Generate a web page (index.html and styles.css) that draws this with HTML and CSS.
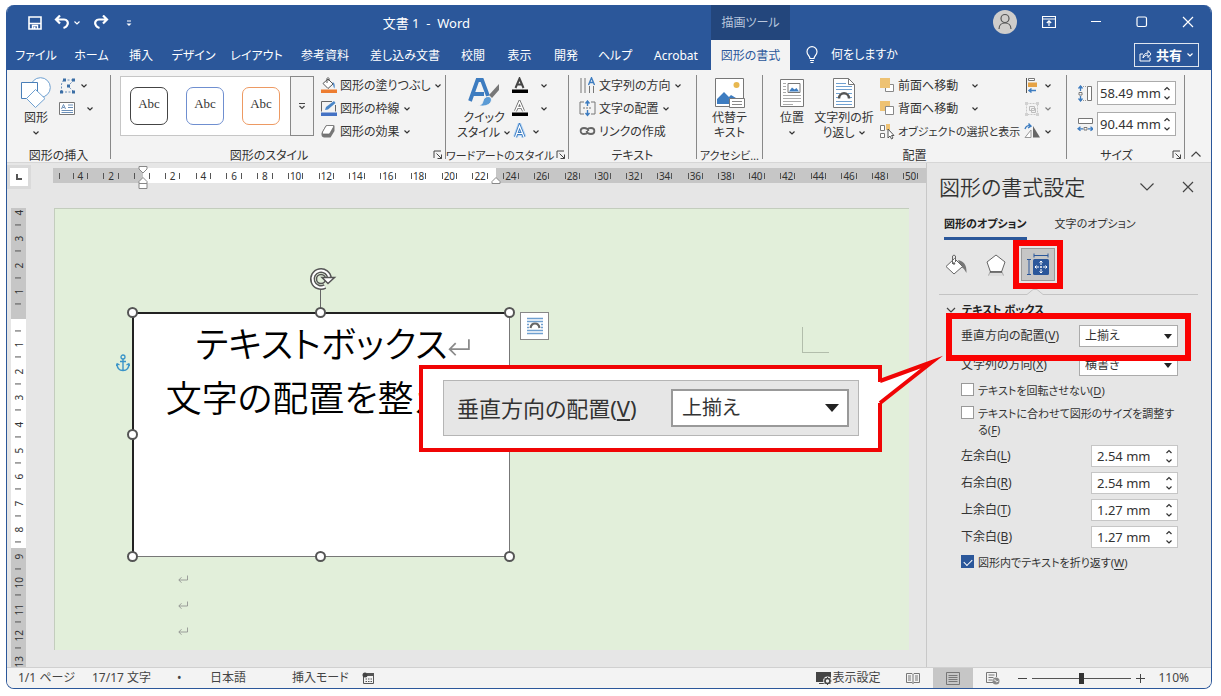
FILE: index.html
```html
<!DOCTYPE html>
<html lang="ja">
<head>
  <meta charset="UTF-8">
  <title>文書 1 - Word</title>
  <link rel="stylesheet" href="styles.css">
</head>
<body>

<svg class="defs" aria-hidden="true">
  <symbol id="chev" viewBox="0 0 8 8"><path d="M1.5 2.5 4 5l2.5-2.5" fill="none" stroke="currentColor" stroke-width="1.2"/></symbol>
  <symbol id="up" viewBox="0 0 8 8"><path d="M1.5 5 4 2.5 6.5 5" fill="none" stroke="currentColor" stroke-width="1.2"/></symbol>
  <symbol id="launcher" viewBox="0 0 10 10"><path d="M1 8V1h7M3.500 3.500l5 5M8.500 4.500v4h-4" fill="none" stroke="#444"/></symbol>
  <symbol id="ret" viewBox="0 0 20 16"><path d="M19 1v9H2M7 4.500 1.500 10 7 15.500" fill="none" stroke="#8a8a8a" stroke-width="1.600"/></symbol>
</svg>

<div class="window">
  <header class="header">
    <div class="titlebar">
      <div class="quick">
        <button aria-label="上書き保存"><svg width="14" height="14" viewBox="0 0 14 14"><path d="M1 1h12v12H1z" fill="none" stroke="#fff" stroke-width="1.600"/><path d="M1 7.500h12M4.500 13V9.500h5V13" fill="none" stroke="#fff" stroke-width="1.400"/><path d="M5.500 10.500h2V13h-2z" fill="#fff"/></svg></button>
        <button aria-label="元に戻す"><svg width="16" height="16" viewBox="0 0 16 16"><path d="M6 .5 2 4.500l4 4M2.500 4.500H10c3 0 4.500 2.500 3.500 5-.5 1.500-2 3-4 3.500" fill="none" stroke="#fff" stroke-width="2.200"/></svg><svg width="8" height="8"><use href="#chev"/></svg></button>
        <button aria-label="やり直し"><svg width="16" height="16" viewBox="0 0 16 16"><path d="m10 .5 4 4-4 4M13.500 4.500H6C3 4.500 1.500 7 2.500 9.500c.5 1.500 2 3 4 3.500" fill="none" stroke="#fff" stroke-width="2.200"/></svg></button>
        <button aria-label="クイックアクセスのカスタマイズ"><svg width="8" height="8" viewBox="0 0 8 8"><path d="M2 2h4" stroke="#fff"/><path d="M1.500 4.500h5L4 7z" fill="#fff"/></svg></button>
      </div>
      <span class="doc-title">文書 1 &nbsp;-&nbsp; Word</span>
    </div>
    <div class="tool-label">描画ツール</div>
    <div class="win-buttons">
      <button class="avatar" aria-label="アカウント"><svg width="24" height="24" viewBox="0 0 24 24"><circle cx="12" cy="12" r="12" fill="#cfcdcb"/><circle cx="12" cy="8.500" r="4" fill="none" stroke="#555" stroke-width="1.200"/><path d="M6 19c0-8 12-8 12 0" fill="none" stroke="#555" stroke-width="1.200"/></svg></button>
      <button aria-label="リボンの表示オプション"><svg width="14" height="12" viewBox="0 0 14 12"><path d="M.5.5h13v11H.5zM.5 3h13M7 10V5M4.800 7 7 4.800 9.200 7" fill="none" stroke="#fff" stroke-width="1.200"/></svg></button>
      <button aria-label="最小化"><svg width="12" height="12"><path d="M1 5.500h10" stroke="#fff"/></svg></button>
      <button aria-label="最大化"><svg width="12" height="12"><rect x="1" y="1" width="9.500" height="9.500" rx="1.500" fill="none" stroke="#fff" stroke-width="1.200"/></svg></button>
      <button aria-label="閉じる"><svg width="12" height="12"><path d="M1 1l10 10M11 1 1 11" stroke="#fff" stroke-width="1.200"/></svg></button>
    </div>
    <nav class="tabs">
      <button>ファイル</button>
      <button>ホーム</button>
      <button>挿入</button>
      <button>デザイン</button>
      <button>レイアウト</button>
      <button>参考資料</button>
      <button>差し込み文書</button>
      <button>校閲</button>
      <button>表示</button>
      <button>開発</button>
      <button>ヘルプ</button>
      <button>Acrobat</button>
    </nav>
    <button class="tab-active">図形の書式</button>
    <div class="tell">
      <button class="tell-me"><svg width="12" height="18" viewBox="0 0 12 18"><path d="M4 12.500c0-2.500-3-3.500-3-6.800a5 5 0 0 1 10 0c0 3.300-3 4.300-3 6.800zM4 14.500h4M4.500 16.500h3" fill="none" stroke="#fff" stroke-width="1.200"/></svg>何をしますか</button>
      <button class="share"><svg width="13" height="13" viewBox="0 0 13 13"><path d="M4 5H1v7h10V8.500M4 9c0-3 2-5 5-5V1.500l3 3.500-3 3.500V6C7 6 5 7 4 9z" fill="none" stroke="#fff"/></svg>共有<svg width="8" height="8"><use href="#chev"/></svg></button>
    </div>
  </header>

  <div class="ribbon">
    <section class="group g-insert">
      <div class="group-body">
        <button class="big">
          <svg width="32" height="32" viewBox="0 0 32 32"><circle cx="20.500" cy="10.500" r="9.800" fill="#fff" stroke="#6fa0d0"/><path d="M1.500 5.500h16v16h-16z" fill="#fff" stroke="#4a7fb8"/><path d="M15.500 12.500 25 21.500l-9.500 9-9-9z" fill="#fff" stroke="#6fa0d0"/></svg>
          <span>図形</span>
          <svg width="8" height="8"><use href="#chev"/></svg>
        </button>
        <div class="col icons">
          <button aria-label="図形の編集"><svg width="18" height="16" viewBox="0 0 18 16"><path d="M5 2h10M15 2 9 8l6 6M2.500 14V6l2-4M2.500 14H15" fill="none" stroke="#6b8fb8" stroke-dasharray="2 1.500"/><path d="M4 .5h3v3H4zM13 .5h3v3h-3zM1 12.500h3v3H1zM13 12.500h3v3h-3zM8 6.500h3v3H8z" fill="#3b6ea5"/></svg><svg width="8" height="8"><use href="#chev"/></svg></button>
          <button aria-label="テキスト ボックス"><svg width="16" height="14" viewBox="0 0 16 14"><path d="M.5.5h15v12H.5z" fill="#fff" stroke="#777"/><path d="m2.500 7 2-4.500 2 4.500M3.500 5.500h2M9 3h5M9 5.500h5M2.500 8.500H14M2.500 10.500H14" fill="none" stroke="#6b8fb8"/></svg><svg class="far" width="8" height="8"><use href="#chev"/></svg></button>
        </div>
      </div>
      <div class="group-label">図形の挿入</div>
    </section>

    <section class="group g-style">
      <div class="group-body">
        <div class="gallery">
          <button class="thumb">Abc</button>
          <button class="thumb blue">Abc</button>
          <button class="thumb orange">Abc</button>
          <button class="more" aria-label="その他"><svg width="8" height="8" viewBox="0 0 8 8"><path d="M1 1.500h6M1.500 4 4 6.500 6.500 4" fill="none" stroke="#444" stroke-width="1.200"/></svg></button>
        </div>
        <div class="col">
          <button><svg width="17" height="17" viewBox="0 0 17 17"><path d="m3 6.500 5-4.500 5 5-5 4.500z" fill="#fff" stroke="#555"/><path d="M7 6V1.500q1-2 2 0V4" fill="none" stroke="#555"/><path d="M12.500 5c2.500 1 2.500 4 2 6.500-1.500-1.500-1-4-2-6.500z" fill="#4a86c8"/><path d="M1 12.500h16V16H1z" fill="#ed7d31"/></svg>図形の塗りつぶし<svg width="8" height="8"><use href="#chev"/></svg></button>
          <button><svg width="17" height="17" viewBox="0 0 17 17"><path d="M12 1.500H1.500v10M15.500 5v6.500" fill="none" stroke="#666"/><path d="m5 10 1-3 8-6 1.500 2-7.500 6.500z" fill="#4a86c8"/><path d="M1 12.500h16V16H1z" fill="#4472c4"/></svg>図形の枠線<svg width="8" height="8"><use href="#chev"/></svg></button>
          <button><svg width="17" height="17" viewBox="0 0 17 17"><path d="M1.500 10 5.500 3q.5-1 2-1h5.500q2 0 1.500 2v4l-4 6.500H4q-3-.5-2.500-4.500z" fill="#777"/><path d="M2.500 9 6 3q.5-.5 1.500-.5H13q1 0 .5 1.500l-3.500 6q-.5 1-1.500 1H3.500q-1.500 0-1-2z" fill="#fff" stroke="#666" stroke-width=".7"/></svg>図形の効果<svg width="8" height="8"><use href="#chev"/></svg></button>
        </div>
      </div>
      <div class="group-label">図形のスタイル<button class="launch" aria-label="図形の書式設定"><svg width="10" height="10"><use href="#launcher"/></svg></button></div>
    </section>

    <section class="group g-wordart">
      <div class="group-body">
        <button class="big">
          <svg width="32" height="32" viewBox="0 0 32 32"><path d="M2 24 9.500 3h4.500l6 16M6 17h10" fill="none" stroke="#3d7cc0" stroke-width="3.800"/><path d="M31 7v6l-7 8-3-3z" fill="#777"/><path d="M20 19.500c3 0 4.500 3 2.500 6-2 3-7 4.500-12 3 3-.5 4-2 4.500-4.500.500-3 3-4.500 5-4.500z" fill="#5b9bd5" stroke="#f3f3f3"/></svg>
          <span>クイック<br>スタイル <svg width="8" height="8"><use href="#chev"/></svg></span>
        </button>
        <div class="col icons">
          <button aria-label="文字の塗りつぶし"><svg width="18" height="17" viewBox="0 0 18 17"><path d="M4.500 11 8.500 1.500 12.500 11M6 7.500h5" fill="none" stroke="#444" stroke-width="2"/><path d="M1 12.500h16V16H1z"/></svg><svg class="far" width="8" height="8"><use href="#chev"/></svg></button>
          <button aria-label="文字の輪郭"><svg width="18" height="17" viewBox="0 0 18 17"><path d="M4.500 11 8.500 2 12.500 11M6 7.500h5" fill="none" stroke="#666" stroke-width="3"/><path d="M4.500 11 8.500 2 12.500 11M6 7.500h5" fill="none" stroke="#fff" stroke-width="1.400"/><path d="M1 12.500h16V16H1z"/></svg><svg class="far" width="8" height="8"><use href="#chev"/></svg></button>
          <button aria-label="文字の効果"><svg width="18" height="17" viewBox="0 0 18 17"><path d="M4.500 14 8.500 3 13 14M6 10.500h5" fill="none" stroke="#b5d5f5" stroke-width="5"/><path d="M4.500 14 8.500 3 13 14M6 10.500h5" fill="none" stroke="#3d7cc0" stroke-width="3"/><path d="M4.500 14 8.500 3 13 14M6 10.500h5" fill="none" stroke="#fff" stroke-width="1.200"/></svg><svg width="8" height="8"><use href="#chev"/></svg></button>
        </div>
      </div>
      <div class="group-label small">ワードアートのスタイル<button class="launch" aria-label="文字の効果の設定"><svg width="10" height="10"><use href="#launcher"/></svg></button></div>
    </section>

    <section class="group g-text">
      <div class="group-body">
        <div class="col">
          <button><svg width="17" height="17" viewBox="0 0 17 17"><path d="M2 1v15M6 1v15M10.500 9v7M14.500 9v7" stroke="#777"/><path d="M9.500 8 12.500.8 15.500 8M10.500 5.500h4" fill="none" stroke="#3d7cc0" stroke-width="1.400"/></svg>文字列の方向<svg width="8" height="8"><use href="#chev"/></svg></button>
          <button><svg width="17" height="17" viewBox="0 0 17 17"><path d="M5 2H1v12h4M12 2h4v12h-4" fill="none" stroke="#777"/><path d="M4 8h9" stroke="#777" stroke-dasharray="2 1"/><path d="M8.500 6V1.500M6.500 3.500l2-2.500 2 2.500M8.500 10v5M6.500 13l2 2.500 2-2.500" fill="none" stroke="#3d7cc0" stroke-width="1.400"/></svg>文字の配置<svg width="8" height="8"><use href="#chev"/></svg></button>
          <button><svg width="17" height="17" viewBox="0 0 17 17"><path d="M9 9.500c-1 1-1.500 1.500-4 1.500-4.500 0-4.500-6 0-6 3 0 4 1 4.500 3M8 6.500C9 5.500 9.500 5 12 5c4.500 0 4.500 6 0 6-3 0-4-1-4.500-3" fill="none" stroke="#666" stroke-width="1.800"/></svg>リンクの作成</button>
        </div>
      </div>
      <div class="group-label">テキスト</div>
    </section>

    <section class="group g-access">
      <div class="group-body">
        <button class="big">
          <svg width="32" height="32" viewBox="0 0 32 32"><path d="M1.500 1.500h28v28h-28z" fill="#fff" stroke="#777"/><path d="M3 27v-5l7-7 5 5 2-2 5 3v6z" fill="#3d7cc0"/><circle cx="22.500" cy="8" r="3" fill="#e8b850"/><path d="M15.500 21.500h15v9h-15z" fill="#fff" stroke="#777"/><path d="M18 24.500h10M18 27.500h10" stroke="#888"/></svg>
          <span>代替テ<br>キスト</span>
        </button>
      </div>
      <div class="group-label small">アクセシビ…</div>
    </section>

    <section class="group g-arrange">
      <div class="group-body">
        <button class="big pos">
          <svg width="32" height="32" viewBox="0 0 32 32"><path d="M4.500 2.500h23v27h-23z" fill="#fff" stroke="#777"/><path d="M12 6.500h12v9H12z" fill="#fff" stroke="#777"/><path d="m13 14.500 3-4 2.500 2 2-1.500 2.500 3.500z" fill="#3d7cc0"/><path d="M7 6.500h3M7 9.500h3M7 12.500h3M7 15.500h3M7 18.500h18M7 21.500h18M7 24.500h18M7 27.500h10" stroke="#aaa"/></svg>
          <span>位置</span>
          <svg width="8" height="8"><use href="#chev"/></svg>
        </button>
        <button class="big wrap">
          <svg width="32" height="32" viewBox="0 0 32 32"><path d="M5.500 1.500h15l6 6v23h-21z" fill="#fff" stroke="#777"/><path d="M20.500 1.500v6h6" fill="none" stroke="#777"/><path d="M8 6.500h10M8 9.500h16M8 12.500h16M8 16.500h4M20 16.500h4M8 20.500h2M22 20.500h2M8 24.500h16M8 27.500h16" stroke="#6fa0d0"/><path d="M11 21.500c0-7 10-7 10 0" fill="none" stroke="#555" stroke-width="2.500"/></svg>
          <span>文字列の折<br>り返し <svg width="8" height="8"><use href="#chev"/></svg></span>
        </button>
        <div class="col order">
          <button><svg width="16" height="17" viewBox="0 0 16 17"><path d="M9 7.500h5.500v7h-8V11" fill="#fff" stroke="#888"/><path d="M1 1h10v10H1z" fill="#eec273"/></svg><span>前面へ移動</span><svg width="8" height="8"><use href="#chev"/></svg></button>
          <button><svg width="16" height="17" viewBox="0 0 16 17"><path d="M1 1h10v10H1z" fill="#eec273"/><path d="M6.500 6.500h8v8h-8z" fill="#fff" stroke="#888"/></svg><span>背面へ移動</span><svg width="8" height="8"><use href="#chev"/></svg></button>
          <button><svg width="16" height="17" viewBox="0 0 16 17"><path d="M1.500 2.500h4v5h-4zM1.500 10.500h4v4h-4z" fill="#fff" stroke="#777"/><path d="M7 1h4v6H7z" fill="#eec273"/><path d="M9 6v9l2-2 1.500 3 1.500-1-1.500-2.500H15z" fill="#fff" stroke="#555"/></svg><span class="small">オブジェクトの選択と表示</span></button>
        </div>
        <div class="col icons align">
          <button aria-label="配置"><svg width="16" height="17" viewBox="0 0 16 17"><path d="M2.500 1v15" stroke="#555"/><path d="M4.500 1.500h6v2h-6z" fill="#fff" stroke="#777"/><path d="M4 5.500h9V10H4z" fill="#e6a345"/><path d="M5 13.500h7M7.500 11.500l-2.500 2 2.500 2" fill="none" stroke="#3d7cc0" stroke-width="1.500"/></svg><svg width="8" height="8"><use href="#chev"/></svg></button>
          <button class="off" aria-label="グループ化" disabled><svg width="16" height="17" viewBox="0 0 16 17"><path d="M2.500 3.500h11v11h-11z" fill="none" stroke="#aaa" stroke-dasharray="2 1"/><path d="M5.500 6.500h5v4h-5zM7.500 8.500h4v4h-4z" fill="none" stroke="#999"/><path d="M1 2h3v3H1zM12 2h3v3h-3zM1 13h3v3H1zM12 13h3v3h-3z" fill="#bbb"/></svg><svg width="8" height="8"><use href="#chev"/></svg></button>
          <button aria-label="回転"><svg width="16" height="17" viewBox="0 0 16 17"><path d="M7 14.500H1L7 7z" fill="#fff" stroke="#999"/><path d="M9 3v11.500h7z" fill="#666"/><path d="M1 6c1-3 3-4 5.500-3M4.500.5 7 3.200 4 5" fill="none" stroke="#3d7cc0" stroke-width="1.400"/></svg><svg width="8" height="8"><use href="#chev"/></svg></button>
        </div>
      </div>
      <div class="group-label">配置</div>
    </section>

    <section class="group g-size">
      <div class="group-body size-body">
        <label class="size-row">
          <svg width="16" height="17" viewBox="0 0 16 17"><path d="M4 1.500h6M4 15.500h6" stroke="#999" stroke-dasharray="1 1"/><path d="M10.500 1.500h4v14h-4zM2 7.500h3v2.500H2z" fill="#fff" stroke="#777"/><path d="M3.500 6V2M1.500 3.500l2-2.500 2 2.500M3.500 11v4M1.500 13.500l2 2.500 2-2.500" fill="none" stroke="#3d7cc0" stroke-width="1.300"/></svg>
          <span class="spin"><input type="text" value="58.49 mm" aria-label="高さ"><span class="steps"><button aria-label="増やす"><svg width="8" height="8"><use href="#up"/></svg></button><button aria-label="減らす"><svg width="8" height="8"><use href="#chev"/></svg></button></span></span>
        </label>
        <label class="size-row">
          <svg width="16" height="17" viewBox="0 0 16 17"><path d="M1.500 2.500h14v5h-14zM7 11.500h3V14H7z" fill="#fff" stroke="#777"/><path d="M6 12.800H2M3.500 10.800l-2.500 2 2.500 2M11 12.800h4M13.500 10.800l2.500 2-2.500 2" fill="none" stroke="#3d7cc0" stroke-width="1.300"/></svg>
          <span class="spin"><input type="text" value="90.44 mm" aria-label="幅"><span class="steps"><button aria-label="増やす"><svg width="8" height="8"><use href="#up"/></svg></button><button aria-label="減らす"><svg width="8" height="8"><use href="#chev"/></svg></button></span></span>
        </label>
      </div>
      <div class="group-label">サイズ<button class="launch" aria-label="サイズの設定"><svg width="10" height="10"><use href="#launcher"/></svg></button></div>
    </section>
    <button class="collapse" aria-label="リボンを折りたたむ"><svg width="10" height="8" viewBox="0 0 10 8"><path d="m.5 6.500 4.500-4.500 4.500 4.500" fill="none" stroke="#444" stroke-width="1.200"/></svg></button>
  </div>

  <div class="workspace">
    <main class="document">
      <div class="ruler-row">
        <button class="tab-stop" aria-label="タブの種類"><svg width="8" height="8"><path d="M2 1v5h5" fill="none" stroke="#555" stroke-width="2"/></svg></button>
        <div class="ruler">
          <i class="first"></i>
          <i><b>4</b></i><i><b>2</b></i><i><b></b></i><i><b>2</b></i><i><b>4</b></i><i><b>6</b></i><i><b>8</b></i>
          <i><b>10</b></i><i><b>12</b></i><i><b>14</b></i><i><b>16</b></i><i><b>18</b></i><i><b>20</b></i><i><b>22</b></i>
          <i><b>24</b></i><i><b>26</b></i><i><b>28</b></i><i><b>30</b></i><i><b>32</b></i><i><b>34</b></i><i><b>36</b></i>
          <i><b>38</b></i><i><b>40</b></i><i><b>42</b></i><i><b>44</b></i><i><b>46</b></i><i><b>48</b></i><i><b>50</b></i>
          <svg class="indent left" width="10" height="25" viewBox="0 0 10 25"><path d="M1 1.500h8V4L5 8 1 4zM5 12.500l4 4v2H1v-2zM1 18.500h8v5H1z" fill="#fff" stroke="#888"/></svg>
          <svg class="indent right" width="10" height="9" viewBox="0 0 10 9"><path d="m5 1.500 4 4v2H1v-2z" fill="#fff" stroke="#888"/></svg>
        </div>
      </div>
      <div class="canvas">
        <div class="vruler"><div class="vmarks">
          <i>4</i><i>3</i><i>2</i><i>1</i><i></i><i>1</i><i>2</i><i>3</i><i>4</i><i>5</i><i>6</i><i>7</i><i>8</i><i>9</i><i>10</i><i>11</i><i>12</i><i>13</i>
        </div></div>
        <div class="page">
          <svg class="anchor" width="14" height="18" viewBox="0 0 14 18"><path d="M7 5v11.500M4 7.500h6M1 9.500c0 4 2 7 6 7s6-3 6-7M1 9.500l-.5 2.500M1 9.500l2.500 1.500M13 9.500l.5 2.500M13 9.500 10.500 11" fill="none" stroke="#3a94c8" stroke-width="1.400"/><circle cx="7" cy="3" r="2" fill="none" stroke="#3a94c8" stroke-width="1.300"/></svg>
          <div class="textbox">
            <p>テキストボックス<svg class="ret" width="22" height="18"><use href="#ret"/></svg></p>
            <p>文字の配置を整える</p>
            <span class="stem"></span>
            <svg class="rotate" width="28" height="24" viewBox="0 0 28 24"><path d="M20.500 11.500A8.500 8.500 0 1 0 16 19.500" fill="none" stroke="#555" stroke-width="5"/><path d="M20.500 11.500A8.500 8.500 0 1 0 16 19.500" fill="none" stroke="#fff" stroke-width="2"/><circle cx="12" cy="12" r="4.500" fill="none" stroke="#555" stroke-width="1.500"/><path d="M13 10.500h12.500l-6.500 6z" fill="#fff" stroke="#555" stroke-width="1.500"/></svg>
            <span class="handle tl"></span><span class="handle tc"></span><span class="handle tr"></span>
            <span class="handle ml"></span>
            <span class="handle bl"></span><span class="handle bc"></span><span class="handle br"></span>
          </div>
          <button class="layout-opt" aria-label="レイアウト オプション"><svg width="18" height="18" viewBox="0 0 18 18"><path d="M1 1.500h16M1 4.500h16M1 7.500h2M15 7.500h2M1 10.500h2M15 10.500h2M1 13.500h16M1 16.500h16" stroke="#6fa0d0" stroke-width="1.300"/><path d="M4.500 11c1-6 8-6 9 0" fill="none" stroke="#666" stroke-width="2.200"/></svg></button>
          <span class="crop"></span>
          <div class="marks">
            <svg width="10" height="8"><use href="#ret"/></svg>
            <svg width="10" height="8"><use href="#ret"/></svg>
            <svg width="10" height="8"><use href="#ret"/></svg>
          </div>
        </div>
      </div>
    </main>

    <aside class="panel">
      <div class="panel-head">
        <h2>図形の書式設定</h2>
        <button aria-label="作業ウィンドウのオプション"><svg width="16" height="12" viewBox="0 0 16 12"><path d="m1.500 2.500 6.500 6.500 6.500-6.500" fill="none" stroke="#444" stroke-width="1.200"/></svg></button>
        <button aria-label="閉じる"><svg width="12" height="12"><path d="m1 1 10 10M11 1 1 11" stroke="#444" stroke-width="1.200"/></svg></button>
      </div>
      <div class="panel-tabs small">
        <button class="on">図形のオプション</button>
        <button>文字のオプション</button>
      </div>
      <div class="panel-icons">
        <button aria-label="塗りつぶしと線"><svg width="22" height="22" viewBox="0 0 22 22"><path d="M13 6c5 1 9 4 8.500 13-2-3-2.500-5-5.500-6z" fill="#777"/><path d="m1 12.500 8.500-8 8 8-8.500 7.500z" fill="#fff" stroke="#666"/><path d="M7.500 10V2q1.500-2 3 0v6" fill="none" stroke="#666"/><circle cx="9" cy="9.500" r="1.200" fill="#666"/></svg></button>
        <button aria-label="効果"><svg width="22" height="24" viewBox="0 0 22 24"><path d="m11 2 9 7-3.500 10h-11L2 9z" fill="#fff" stroke="#666"/><path d="m5 19-2 4h16l-2-4z" fill="#ddd"/><path d="m5 19-1.500 3.500M17 19l1.500 3.500" stroke="#aaa"/><path d="M5 19h12" stroke="#555" stroke-width="1.500"/></svg></button>
        <span class="mark-icon"><button class="on" aria-label="レイアウトとプロパティ"><svg width="24" height="24" viewBox="0 0 24 24"><path d="M8 2.500h14M8 .5v4M22 .5v4M3 6v15M1 6.500h4M1 21.500h4" stroke="#2b579a" fill="none"/><rect x="7" y="6" width="16" height="16" rx="1.500" fill="#2b579a"/><path d="M15 8v4M15 16v4M9 14h4M17 14h4M13.500 9.500 15 8l1.500 1.500M13.500 18.500 15 20l1.500-1.500M10.500 12.500 9 14l1.500 1.500M19.500 12.500 21 14l-1.500 1.500M15 13v2M14 14h2" fill="none" stroke="#fff"/></svg></button></span>
      </div>
      <svg class="rule" height="6" width="100%"><path d="M0 5.500h88l6-5h4l6 5h600" fill="none" stroke="#c3c3c3"/></svg>
      <div class="section-head small"><svg width="10" height="8" viewBox="0 0 10 8"><path d="m1 2 4 4 4-4" fill="none" stroke="#444" stroke-width="1.200"/></svg>テキスト ボックス</div>
      <div class="row marked">
        <label for="valign">垂直方向の配置(<u>V</u>)</label>
        <span class="pick"><select id="valign"><option>上揃え</option></select></span>
      </div>
      <div class="row">
        <label for="dir">文字列の方向(<u>X</u>)</label>
        <span class="pick"><select id="dir"><option>横書き</option></select></span>
      </div>
      <div class="check small"><input type="checkbox" id="norot"><label for="norot">テキストを回転させない(<u>D</u>)</label></div>
      <div class="check small"><input type="checkbox" id="fit"><label for="fit">テキストに合わせて図形のサイズを調整する(<u>F</u>)</label></div>
      <div class="margins">
        <div class="row">
          <label for="ml">左余白(<u>L</u>)</label>
          <span class="spin"><input type="text" id="ml" value="2.54 mm"><span class="steps"><button aria-label="増やす"><svg width="8" height="8"><use href="#up"/></svg></button><button aria-label="減らす"><svg width="8" height="8"><use href="#chev"/></svg></button></span></span>
        </div>
        <div class="row">
          <label for="mr">右余白(<u>R</u>)</label>
          <span class="spin"><input type="text" id="mr" value="2.54 mm"><span class="steps"><button aria-label="増やす"><svg width="8" height="8"><use href="#up"/></svg></button><button aria-label="減らす"><svg width="8" height="8"><use href="#chev"/></svg></button></span></span>
        </div>
        <div class="row">
          <label for="mt">上余白(<u>T</u>)</label>
          <span class="spin"><input type="text" id="mt" value="1.27 mm"><span class="steps"><button aria-label="増やす"><svg width="8" height="8"><use href="#up"/></svg></button><button aria-label="減らす"><svg width="8" height="8"><use href="#chev"/></svg></button></span></span>
        </div>
        <div class="row">
          <label for="mb">下余白(<u>B</u>)</label>
          <span class="spin"><input type="text" id="mb" value="1.27 mm"><span class="steps"><button aria-label="増やす"><svg width="8" height="8"><use href="#up"/></svg></button><button aria-label="減らす"><svg width="8" height="8"><use href="#chev"/></svg></button></span></span>
        </div>
      </div>
      <div class="check small"><input type="checkbox" id="wrap" checked><label for="wrap">図形内でテキストを折り返す(<u>W</u>)</label></div>
    </aside>
  </div>

  <footer class="status">
    <span class="s-page">1/1 ページ</span>
    <span class="s-count">17/17 文字</span>
    <span class="s-dot">•</span>
    <span class="s-lang">日本語</span>
    <span class="s-mode">挿入モード</span>
    <svg width="13" height="13" viewBox="0 0 13 13"><path d="M1.500 3.500h10v8h-10z" fill="none" stroke="#555"/><path d="M5 1h7v3H5z" fill="#555"/><circle cx="3" cy="3" r="2.500" fill="#444"/><path d="M3.500 7h7M3.500 9.500h7" stroke="#555" stroke-dasharray="1.500 1"/></svg>
    <div class="status-right">
      <button class="disp"><svg width="16" height="16" viewBox="0 0 16 16"><path d="M0 2h15v7H9v3H0z" fill="#444"/><path d="M3 13.500h5" stroke="#444"/><circle cx="11.500" cy="11" r="4.500" fill="#f3f3f3"/><circle cx="11.500" cy="11" r="2.500" fill="none" stroke="#444" stroke-width="1.600"/><path d="M11.500 7v8M7.500 11h8M8.700 8.200l5.600 5.600M14.300 8.200l-5.600 5.600" stroke="#444" stroke-dasharray="1.200 5.600"/></svg>表示設定</button>
      <button class="view" aria-label="閲覧モード"><svg width="14" height="12" viewBox="0 0 14 12"><path d="M.5 1.500h5.500l1 1 1-1h5.500v9H8l-1 1-1-1H.5zM7 2.500v9M2 4h3M2 6h3M2 8h3M9 4h3M9 6h3M9 8h3" fill="none" stroke="#777"/></svg></button>
      <button class="view on" aria-label="印刷レイアウト"><svg width="14" height="13" viewBox="0 0 14 13"><path d="M.5.5h13v12H.5zM2.500 3.500h9M2.500 5.500h9M2.500 7.500h9M2.500 9.500h9" fill="none" stroke="#777"/></svg></button>
      <button class="view" aria-label="Web レイアウト"><svg width="14" height="13" viewBox="0 0 14 13"><path d="M7 10.500H.5V.5h10V5M2.500 3h6M2.500 5.500h5M2.500 8h4" fill="none" stroke="#777"/><circle cx="10" cy="9" r="3.500" fill="#888"/><path d="M7.500 8h2l1 2 2-1" stroke="#eee" fill="none"/></svg></button>
      <button class="zoom-btn" aria-label="縮小"><svg width="9" height="9"><path d="M0 4.500h9" stroke="#444"/></svg></button>
      <input type="range" min="10" max="210" value="110" aria-label="ズーム">
      <button class="zoom-btn" aria-label="拡大"><svg width="9" height="9"><path d="M0 4.500h9M4.500 0v9" stroke="#444"/></svg></button>
      <span class="s-zoom">110%</span>
    </div>
  </footer>

  <!-- magnified view of the vertical alignment setting -->
  <div class="callout">
    <div class="callout-inner">
      <label for="valign-big">垂直方向の配置(<u>V</u>)</label>
      <span class="pick"><select id="valign-big"><option>上揃え</option></select></span>
    </div>
    <svg class="pointer" width="72" height="60" viewBox="0 0 72 60"><path d="M3 29h6v21H3z" fill="#fff"/><path d="M8 28 60 9 8 50" fill="#fff" stroke="#f00505" stroke-width="4" stroke-miterlimit="12"/></svg>
  </div>
</div>

</body>
</html>
```
FILE: styles.css
```css
* {
  box-sizing: border-box;
}
body {
  margin: 5px 9px 7px 6px;
  background: #fff;
  color: #333;
  font-family: "Noto Sans", "Noto Sans CJK JP", sans-serif;
  font-feature-settings: "palt";
  font-size: 12px;
  line-height: 16px;
}
button, input, select {
  font: inherit;
  font-feature-settings: inherit;
  color: inherit;
  background: none;
  border: none;
  margin: 0;
  padding: 0;
}
button {
  cursor: pointer;
  white-space: nowrap;
}
svg {
  flex: none;
}
u {
  text-underline-offset: 2px;
}
.small {
  font-size: 11px;
}
.defs {
  position: absolute;
  width: 0;
  height: 0;
}
.window {
  position: relative;
  display: flex;
  flex-direction: column;
  height: calc(100vh - 12px);
  min-height: 600px;
  border: 1px solid #2b579a;
  border-top: none;
  border-radius: 8px;
  overflow: hidden;
  background: #e6e6e6;
}

/* title bar and tabs */
.header {
  display: grid;
  grid-template-columns: 704px 79px 1fr;
  grid-template-rows: 35px 30px;
  background: #2b579a;
  color: #fff;
}
.titlebar {
  display: flex;
  align-items: center;
  justify-content: space-between;
  padding: 0 241px 0 21px;
}
.quick {
  display: flex;
  gap: 12px;
}
.quick button {
  display: flex;
  align-items: center;
  gap: 3px;
}
.quick button:last-child {
  margin-left: 4px;
}
.doc-title {
  font-size: 13px;
}
.tool-label {
  background: #23467c;
  color: #b9c6dc;
  text-align: center;
  line-height: 36px;
}
.win-buttons {
  display: flex;
  align-items: center;
  justify-content: flex-end;
  gap: 34px;
  padding: 0 17px 2px 0;
}
.win-buttons button {
  display: flex;
}
.avatar {
  margin-right: -9px;
}
.tabs {
  display: grid;
  grid-template-columns: 58px 53px 46px 59px 67px 70px 90px 46px 47px 46px 52px 1fr;
}
.tabs button, .tab-active {
  padding-top: 2px;
}
.tab-active {
  background: #f3f3f3;
  color: #2b579a;
}
.tell {
  display: flex;
  align-items: center;
  justify-content: space-between;
  padding: 0 12px 0 16px;
}
.tell-me {
  display: flex;
  align-items: center;
  gap: 13px;
}
.share {
  display: flex;
  align-items: center;
  gap: 4px;
  height: 24px;
  padding: 0 4px;
  border: 1px solid #dfe6f0;
  font-size: 13px;
  font-weight: bold;
}

/* ribbon */
.ribbon {
  display: flex;
  height: 93px;
  background: #f3f3f3;
  border-bottom: 1px solid #d6d6d6;
}
.group {
  display: flex;
  flex-direction: column;
  flex: none;
  margin: 5px 0 3px;
  border-right: 1px solid #888;
}
.group-body {
  display: flex;
  flex: 1;
}
.group-label {
  position: relative;
  height: 13px;
  line-height: 20px;
  text-align: center;
  white-space: nowrap;
}
.launch {
  position: absolute;
  right: 2px;
  top: 4px;
  line-height: 0;
}
.g-insert { width: 104px; }
.g-style { width: 335px; }
.g-wordart { width: 123px; }
.g-text { width: 128px; }
.g-access { width: 66px; }
.g-arrange { width: 304px; }
.g-size { width: 118px; }
.g-style .group-label, .g-size .group-label {
  padding-right: 18px;
}
.g-wordart .group-label {
  padding-right: 16px;
}
.big {
  display: flex;
  flex-direction: column;
  align-items: center;
  line-height: 15px;
}
.big > svg:first-child {
  margin: 2px 0 1px;
}
.big > svg:last-child {
  margin-top: 4px;
}
.col {
  display: flex;
  flex-direction: column;
}
.col button {
  display: flex;
  align-items: center;
  gap: 3px;
  height: 23px;
  margin-top: -1px;
  margin-bottom: 1px;
}
.icons .far {
  margin-left: 8px;
}
.g-insert .group-body {
  padding-left: 13px;
  gap: 7px;
}
.g-style .group-body {
  padding-left: 9px;
  gap: 6px;
}
.gallery {
  display: flex;
  align-items: center;
  gap: 18px;
  height: 60px;
  margin-top: 1px;
  padding-left: 9px;
  background: #fff;
  border: 1px solid #c6c6c6;
}
.thumb {
  width: 38px;
  height: 38px;
  padding-bottom: 4px;
  border: 1px solid #444;
  border-radius: 7px;
  font-family: "Liberation Serif", serif;
  font-size: 13px;
}
.blue { border-color: #6f8fd0; }
.orange { border-color: #ed9a63; }
.more {
  align-self: stretch;
  width: 24px;
  margin: -1px -1px -1px -8px;
  background: #f3f3f3;
  border: 1px solid #888;
}
.g-wordart .group-body {
  padding-left: 11px;
}
.g-text .group-body {
  padding-left: 10px;
}
.g-access .group-body {
  justify-content: center;
}
.g-arrange .group-body {
  padding-left: 12px;
}
.pos {
  width: 34px;
}
.wrap {
  width: 70px;
}
.order {
  width: 145px;
}
.order span {
  min-width: 70px;
  text-align: left;
}
.align button {
  gap: 4px;
}
.off {
  opacity: 0.6;
}
.group-body.size-body {
  flex-direction: column;
  gap: 7px;
  padding: 6px 8px 0 10px;
}
.size-row {
  display: flex;
  align-items: center;
  gap: 4px;
}
.spin {
  display: flex;
  flex: 1;
  height: 24px;
  background: #fff;
  border: 1px solid #ababab;
}
.spin input {
  flex: 1;
  width: 0;
  padding-left: 2px;
  font-size: 13px;
}
.steps {
  display: flex;
  flex-direction: column;
  justify-content: center;
  width: 12px;
}
.steps button {
  display: flex;
  height: 9px;
  align-items: center;
}
.collapse {
  margin: auto 10px 0 auto;
}

/* rulers */
.workspace {
  display: flex;
  flex: 1;
  min-height: 0;
}
.document {
  display: flex;
  flex-direction: column;
  flex: 1;
  min-width: 0;
}
.ruler-row {
  display: flex;
  align-items: flex-start;
  height: 45px;
}
.tab-stop {
  width: 24px;
  height: 24px;
  margin-top: 2px;
  background: #fff;
  border: 3px solid #dadada;
}
.ruler {
  position: relative;
  display: flex;
  flex: 1;
  height: 15px;
  margin: 5px 0 0 22px;
  background: linear-gradient(to right, #c6c6c6 90px, #fff 90px, #fff 443px, #c6c6c6 443px);
}
.ruler i {
  display: flex;
  flex: 1;
  align-items: center;
  justify-content: center;
}
.ruler .first {
  flex: 0 0 12px;
}
.ruler .first::before {
  content: "";
  height: 6px;
  border-left: 1px solid #555;
}
.ruler b {
  width: 50%;
  height: 6px;
  border: solid #555;
  border-width: 0 1px;
  font: 10px/6px "Noto Sans", sans-serif;
  text-align: center;
}
.indent {
  position: absolute;
}
.indent.left {
  left: 85px;
  top: -3px;
}
.indent.right {
  left: 438px;
  top: 8px;
}
.canvas {
  display: flex;
  flex: 1;
  min-height: 0;
}
.vruler {
  width: 15px;
  margin-left: 4px;
  overflow: hidden;
  background: linear-gradient(#c6c6c6 111px, #fff 111px, #fff 340px, #c6c6c6 340px);
}
.vmarks {
  display: flex;
  flex-direction: column;
  height: 476px;
  margin-top: -9px;
}
.vmarks i {
  display: flex;
  flex: 1;
  align-items: center;
  justify-content: center;
  writing-mode: vertical-rl;
  transform: rotate(180deg);
  font: 10px/14px "Noto Sans", sans-serif;
  background: linear-gradient(#555, #555) center top / 6px 1px no-repeat;
}

/* page */
.page {
  position: relative;
  flex: 1;
  margin: 0 17px 17px 28px;
  background: #e2efda;
  border: solid #c3cdbd;
  border-width: 1px 0 0 1px;
}
.anchor {
  position: absolute;
  left: 61px;
  top: 145px;
}
.textbox {
  position: absolute;
  left: 77px;
  top: 103px;
  width: 378px;
  height: 245px;
  padding-top: 4px;
  background: #fff;
  border: solid #222;
  border-width: 2px 1px 1px 2px;
  border-right-color: #777;
  border-bottom-color: #777;
  color: #000;
  font-size: 36px;
  font-weight: 350;
  line-height: 54px;
  text-align: center;
}
.textbox p {
  margin: 0;
  white-space: nowrap;
}
.ret {
  margin-right: -22px;
  vertical-align: 2px;
}
.handle {
  position: absolute;
  width: 11px;
  height: 11px;
  background: #fff;
  border: 2px solid #555;
  border-radius: 50%;
}
.tl, .tc, .tr { top: -7px; }
.ml { top: 115px; }
.bl, .bc, .br { bottom: -6px; }
.tl, .ml, .bl { left: -7px; }
.tc, .bc { left: 181px; }
.tr, .br { right: -6px; }
.stem {
  position: absolute;
  left: 186px;
  top: -26px;
  height: 20px;
  border-left: 1px solid #666;
}
.rotate {
  position: absolute;
  left: 175px;
  top: -47px;
}
.layout-opt {
  position: absolute;
  left: 465px;
  top: 103px;
  width: 29px;
  height: 28px;
  background: #fff;
  border: 1px solid #888;
  line-height: 0;
}
.crop {
  position: absolute;
  left: 747px;
  top: 118px;
  width: 27px;
  height: 26px;
  border: solid #b2bdab;
  border-width: 0 0 1px 1px;
}
.marks {
  position: absolute;
  left: 123px;
  top: 366px;
  display: flex;
  flex-direction: column;
  gap: 18px;
}

/* format panel */
.panel {
  width: 285px;
  padding: 8px 13px 0 12px;
  border-left: 1px solid #c8c8c8;
}
.panel-head {
  display: flex;
  align-items: center;
  gap: 27px;
  padding-right: 4px;
}
.panel-head h2 {
  flex: 1;
  margin: 0;
  font-size: 21px;
  font-weight: 350;
  line-height: 32px;
  white-space: nowrap;
}
.panel-head button {
  line-height: 0;
}
.panel-tabs {
  display: flex;
  gap: 28px;
  margin: 12px 0 0 5px;
}
.panel-tabs button {
  height: 25px;
  padding-bottom: 4px;
  border-bottom: 3px solid transparent;
}
.panel-tabs .on {
  border-color: #2b579a;
  font-weight: bold;
  color: #222;
}
.panel-icons {
  display: flex;
  align-items: center;
  gap: 18px;
  padding-left: 6px;
}
.panel-icons button {
  line-height: 0;
}
.mark-icon {
  margin-left: -12px;
  padding: 2px;
  border: 6px solid #fa0202;
}
.mark-icon .on {
  width: 34px;
  height: 33px;
  background: #c6c6c6;
  border: 1px solid #9a9a9a;
}
.rule {
  display: block;
}
.section-head {
  display: flex;
  align-items: center;
  gap: 6px;
  height: 18px;
  margin-top: 6px;
  padding-left: 7px;
  font-weight: bold;
  color: #222;
}
.row {
  display: flex;
  align-items: center;
  justify-content: space-between;
  padding: 0 20px 0 22px;
}
.pick {
  display: grid;
  align-items: center;
  width: 99px;
  height: 22px;
  background: #fff;
  border: 1px solid #ababab;
}
.pick select {
  grid-area: 1 / 1;
  appearance: none;
  height: 100%;
  padding-left: 5px;
}
.pick::after {
  content: "";
  grid-area: 1 / 1;
  justify-self: end;
  margin-right: 5px;
  border: solid transparent;
  border-width: 5px 4px 0;
  border-top-color: #222;
  pointer-events: none;
}
.marked {
  position: relative;
  z-index: 1;
  height: 48px;
  margin: -6px 7px -7px 7px;
  padding: 0 7px 2px 9px;
  background: #e6e6e6;
  border: 6px solid #fa0202;
}
.check {
  display: flex;
  gap: 4px;
  padding: 0 16px 0 22px;
  margin-top: 7px;
}
.check input {
  appearance: none;
  flex: none;
  width: 13px;
  height: 13px;
  background: #fff;
  border: 1px solid #999;
}
.check input:checked {
  display: flex;
  align-items: center;
  justify-content: center;
  background: #2b579a;
  border-color: #2b579a;
}
.check input:checked::before {
  content: "";
  width: 7px;
  height: 4px;
  border: solid #fff;
  border-width: 0 0 1px 1px;
  transform: rotate(-45deg);
}
.margins {
  display: flex;
  flex-direction: column;
  gap: 5px;
  margin: 7px 0 6px;
}
.margins .spin {
  flex: none;
  width: 87px;
  height: 22px;
  border-color: #c6c6c6;
}
.margins .spin input {
  padding-left: 5px;
}

/* status bar */
.status {
  display: flex;
  align-items: center;
  height: 21px;
  padding-left: 11px;
  background: #f3f3f3;
  border-top: 1px solid #d0d0d0;
  color: #444;
  white-space: nowrap;
}
.s-page { width: 74px; }
.s-count { width: 85px; }
.s-dot { width: 33px; }
.s-lang { width: 82px; }
.s-mode { width: 70px; }
.status-right {
  display: flex;
  align-items: center;
  align-self: stretch;
  margin-left: auto;
  padding-right: 22px;
}
.disp {
  display: flex;
  align-items: center;
  margin-right: 13px;
}
.view {
  display: flex;
  align-items: center;
  justify-content: center;
  align-self: stretch;
  width: 40px;
}
.view.on {
  background: #c6c6c6;
}
.zoom-btn {
  margin: 0 5px;
  line-height: 0;
}
.status input[type="range"] {
  appearance: none;
  width: 99px;
  height: 12px;
  background: linear-gradient(#555, #555) center / 100% 1px no-repeat;
}
.status input[type="range"]::-webkit-slider-thumb {
  appearance: none;
  width: 5px;
  height: 11px;
  background: #333;
}
.s-zoom {
  margin-left: 8px;
}

/* callout over the page */
.callout {
  position: absolute;
  left: 412px;
  top: 360px;
  width: 463px;
  padding: 11px 19px 12px 20px;
  background: #fff;
  border: 4px solid #f00505;
}
.callout-inner {
  display: flex;
  align-items: center;
  justify-content: space-between;
  height: 56px;
  padding: 0 9px 0 13px;
  background: #e6e6e6;
  border: 1px solid #b5b5b5;
  font-size: 22px;
  line-height: 30px;
}
.callout .pick {
  width: 178px;
  height: 38px;
  border: 2px solid #999;
  font-size: 20px;
}
.callout .pick select {
  padding-left: 9px;
}
.callout .pick::after {
  margin-right: 8px;
  border-width: 8px 7px 0;
}
.pointer {
  position: absolute;
  left: 449px;
  top: -16px;
}
```
